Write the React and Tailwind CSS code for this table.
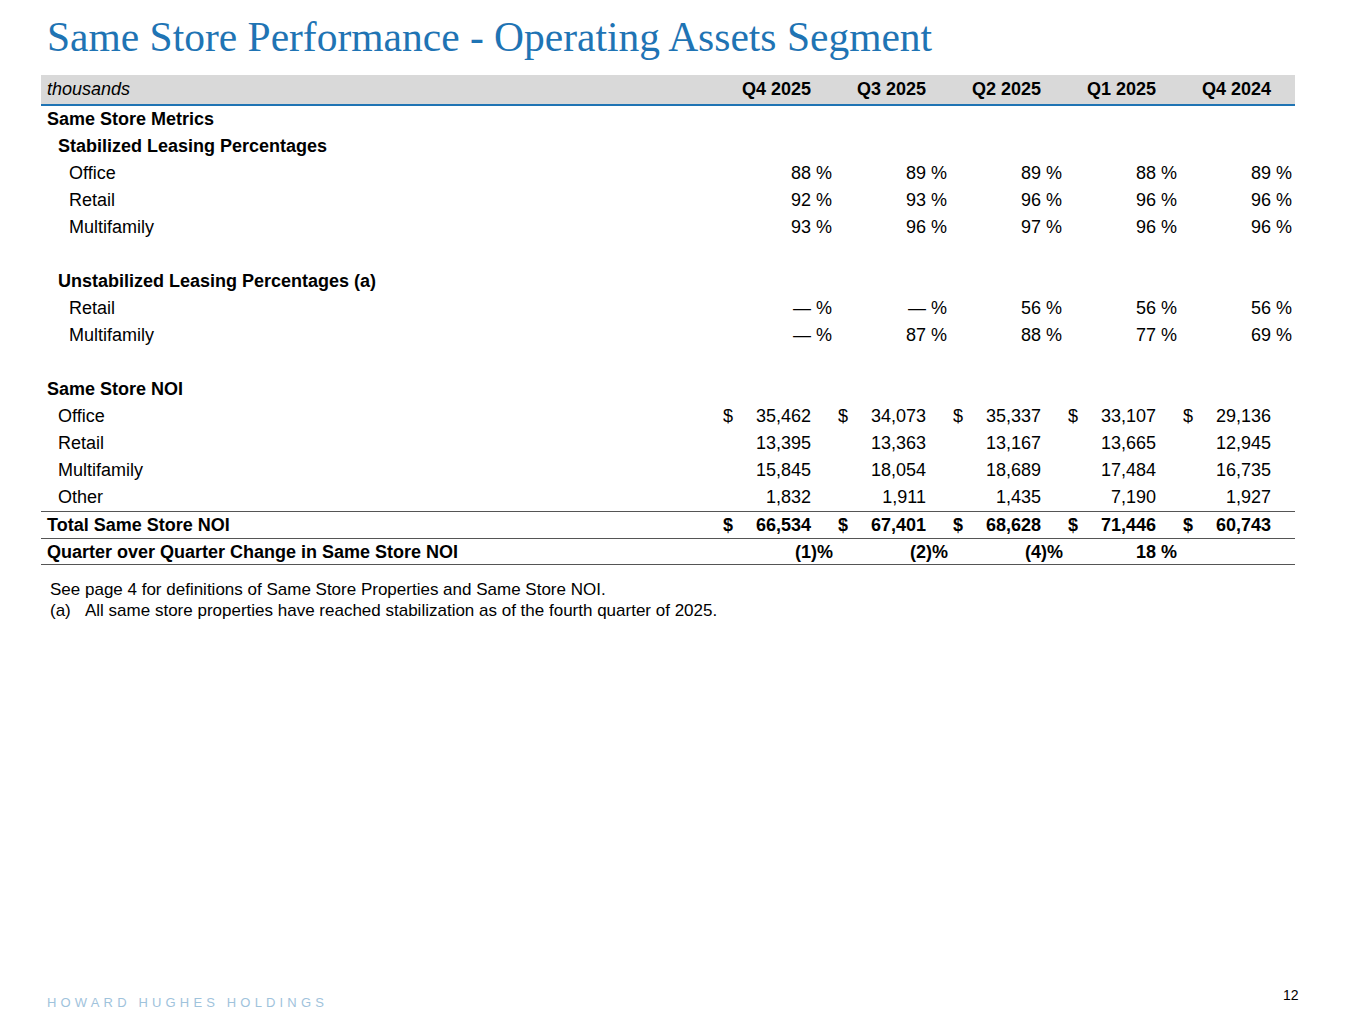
import React from "react";

const cols = ["Q4 2025", "Q3 2025", "Q2 2025", "Q1 2025", "Q4 2024"];

const rows = [
  { label: "Same Store Metrics", level: 0, bold: true },
  { label: "Stabilized Leasing Percentages", level: 1, bold: true },
  { label: "Office", level: 2, vals: ["88", "89", "89", "88", "89"], pct: true },
  { label: "Retail", level: 2, vals: ["92", "93", "96", "96", "96"], pct: true },
  { label: "Multifamily", level: 2, vals: ["93", "96", "97", "96", "96"], pct: true },
  { blank: true },
  { label: "Unstabilized Leasing Percentages (a)", level: 1, bold: true },
  { label: "Retail", level: 2, vals: ["—", "—", "56", "56", "56"], pct: true },
  { label: "Multifamily", level: 2, vals: ["—", "87", "88", "77", "69"], pct: true },
  { blank: true },
  { label: "Same Store NOI", level: 0, bold: true },
  { label: "Office", level: 1, vals: ["35,462", "34,073", "35,337", "33,107", "29,136"], dollar: true },
  { label: "Retail", level: 1, vals: ["13,395", "13,363", "13,167", "13,665", "12,945"] },
  { label: "Multifamily", level: 1, vals: ["15,845", "18,054", "18,689", "17,484", "16,735"] },
  { label: "Other", level: 1, vals: ["1,832", "1,911", "1,435", "7,190", "1,927"] },
  { label: "Total Same Store NOI", level: 0, bold: true, topLine: true, vals: ["66,534", "67,401", "68,628", "71,446", "60,743"], dollar: true, valBold: true },
  { label: "Quarter over Quarter Change in Same Store NOI", level: 0, bold: true, topLine: true, bottomLine: true, vals: ["(1", "(2", "(4", "18", ""], pct: true, valBold: true },
];

const indent = ["pl-[6px]", "pl-[17px]", "pl-[28px]"];

function ValueCell({ v, pct, dollar, bold }) {
  let suffix = "";
  if (pct && v !== "") suffix = v.startsWith("(") ? ")%" : "\u00a0%";
  return (
    <div className={`flex items-center ${bold ? "font-bold" : ""}`}>
      <span className="w-[20px] pl-[3px]">{dollar ? "$" : ""}</span>
      <span className="flex-1 text-right">{v}</span>
      <span className="w-[24px] whitespace-pre">{suffix}</span>
    </div>
  );
}

export default function App() {
  return (
    <div
      className="relative w-[1365px] h-[1024px] bg-white text-black"
      style={{ fontFamily: "'Liberation Sans', Arial, sans-serif" }}
    >
      <div className="h-[75px] pl-[47px] pt-[12px]">
        <h1
          className="text-[41.5px] leading-[50px] text-[#1f74b4]"
          style={{ fontFamily: "'Liberation Serif', Georgia, serif" }}
        >
          Same Store Performance - Operating Assets Segment
        </h1>
      </div>

      <div className="ml-[41px] w-[1254px] text-[18px]">
        <div className="grid grid-cols-[679px_repeat(5,115px)] h-[31px] items-center bg-[#d9d9d9] border-b-2 border-[#1f74b4]">
          <div className="pl-[6px] italic">thousands</div>
          {cols.map((c) => (
            <div key={c} className="text-right pr-[24px] font-bold">
              {c}
            </div>
          ))}
        </div>

        {rows.map((r, i) =>
          r.blank ? (
            <div key={i} className="h-[27px]" />
          ) : (
            <div
              key={i}
              className={`grid grid-cols-[679px_repeat(5,115px)] h-[27px] items-center ${
                r.topLine ? "border-t border-[#555]" : ""
              } ${r.bottomLine ? "border-b border-[#555]" : ""}`}
            >
              <div className={`${indent[r.level]} ${r.bold ? "font-bold" : ""}`}>{r.label}</div>
              {r.vals &&
                r.vals.map((v, j) => (
                  <ValueCell key={j} v={v} pct={r.pct} dollar={r.dollar} bold={r.valBold} />
                ))}
            </div>
          )
        )}

        <div className="mt-[14px] pl-[9px] text-[17px] leading-[21px]">
          <div>See page 4 for definitions of Same Store Properties and Same Store NOI.</div>
          <div className="flex">
            <span className="w-[35px]">(a)</span>
            <span>All same store properties have reached stabilization as of the fourth quarter of 2025.</span>
          </div>
        </div>
      </div>

      <div className="absolute left-[47px] top-[993px] text-[13px] tracking-[0.32em] text-[#9fc3dc]">
        HOWARD HUGHES HOLDINGS
      </div>
      <div className="absolute left-[1283px] top-[985px] text-[14px]">12</div>
    </div>
  );
}
